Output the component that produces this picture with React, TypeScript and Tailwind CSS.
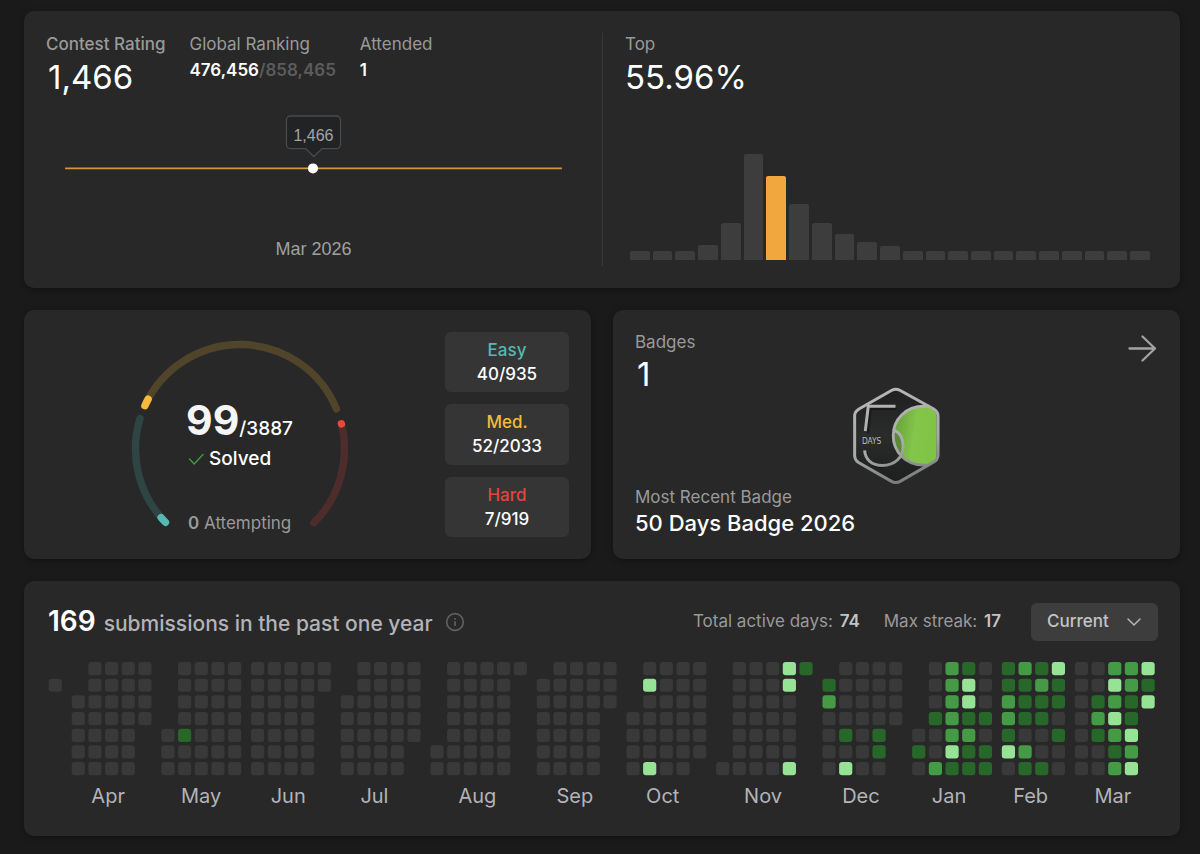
import type { ReactNode } from 'react';
import { ChevronDown } from 'lucide-react';

const ratingBars = [9, 9, 9, 15, 37, 106, 84, 56, 37, 26, 18, 14, 9, 9, 9, 9, 9, 9, 9, 9, 9, 9, 9];
const userBar = 6;

const difficulties = [
  { label: 'Easy', count: '40/935', color: 'text-[#56b8b3]' },
  { label: 'Med.', count: '52/2033', color: 'text-[#f6b93b]' },
  { label: 'Hard', count: '7/919', color: 'text-[#e0463e]' },
];

// One string per week, Sunday first. "." is a day outside the month, 0-3 is the activity level.
const FULL = '0000000';
const months = [
  { label: '', weeks: ['.0.....'] },
  { label: 'Apr', weeks: ['..00000', FULL, FULL, FULL, '0000...'] },
  { label: 'May', weeks: ['....000', '0000100', FULL, FULL, FULL] },
  { label: 'Jun', weeks: [FULL, FULL, FULL, FULL, '00.....'] },
  { label: 'Jul', weeks: ['..00000', FULL, FULL, FULL, '00000..'] },
  { label: 'Aug', weeks: ['.....00', FULL, FULL, FULL, FULL, '0......'] },
  { label: 'Sep', weeks: ['.000000', FULL, FULL, FULL, '000....'] },
  { label: 'Oct', weeks: ['...0000', '0300003', FULL, FULL, '000000.'] },
  { label: 'Nov', weeks: ['......0', FULL, FULL, FULL, '3300003', '1......'] },
  { label: 'Dec', weeks: ['.120000', '0000103', FULL, '0000110', '0000...'] },
  { label: 'Jan', weeks: ['....010', '0001002', '2222231', '1331211', '0001011'] },
  { label: 'Feb', weeks: ['1122130', '2111021', '1211001', '3110100'] },
  { label: 'Mar', weeks: [FULL, '0012100', '2323212', '2211323', '313....'] },
];

const levelColors = ['#393939', '#28672a', '#459b45', '#97e396'];

const CELL = 13.2;
const PITCH = 16.67;
const MONTH_GAP = 6.33;

function Card({ className = '', children }: { className?: string; children: ReactNode }) {
  return (
    <section className={`rounded-[10px] bg-[#282828] p-[22px] shadow-[0_2px_6px_rgba(0,0,0,0.3)] ${className}`}>
      {children}
    </section>
  );
}

function RatingChart() {
  return (
    <svg viewBox="0 0 555 156" className="mt-auto w-full" role="img" aria-label="Contest rating history">
      <path d="M19 58.3H515" stroke="#d0973c" strokeWidth="1.6" />
      <path
        d="M244 6h46a4 4 0 0 1 4 4v24.500a4 4 0 0 1-4 4h-14.500l-8.200 8-8.200-8H244a4 4 0 0 1-4-4V10a4 4 0 0 1 4-4z"
        fill="#222325"
        stroke="#484a4c"
        strokeWidth="1.300"
      />
      <circle cx="266.500" cy="58.300" r="5" fill="#fff" />
      <text x="267" y="31" textAnchor="middle" className="fill-[#a4a4a6] font-['Liberation_Sans',sans-serif] text-[16px]">
        1,466
      </text>
      <text x="267" y="145" textAnchor="middle" className="fill-[#a0a0a2] font-['Liberation_Sans',sans-serif] text-[18px]">
        Mar 2026
      </text>
    </svg>
  );
}

function arc(from: number, to: number, r = 104.5) {
  const point = (deg: number) => {
    const rad = (deg * Math.PI) / 180;
    return `${r * Math.cos(rad)} ${r * Math.sin(rad)}`;
  };
  return `M${point(from)}A${r} ${r} 0 0 1 ${point(to)}`;
}

function SolvedGauge() {
  return (
    <div className="relative w-[218px]">
      <svg viewBox="-109 -117 218 205" fill="none" strokeWidth="7.400" strokeLinecap="round" className="w-full">
        <path d={arc(135.5, 197)} stroke="#2f4544" />
        <path d={arc(204.5, 337.4)} stroke="#50442a" />
        <path d={arc(346, 405)} stroke="#4d2d2b" />
        <path d={arc(135.5, 139)} stroke="#56b8b3" />
        <path d={arc(204.5, 208.5)} stroke="#f6b93b" />
        <path d={arc(346, 346.1)} stroke="#ee453e" />
      </svg>
      <div className="absolute inset-0 flex flex-col pt-16 pl-[55px] whitespace-nowrap">
        <p className="h-12 leading-[48px] text-white">
          <span className="text-[41px] font-bold text-[#f5f5f5]">99</span>
          <span className="text-[19px] font-medium">/3887</span>
        </p>
        <p className="flex items-center gap-[3px] text-[19px] leading-[30px] font-medium text-white">
          <svg width="20" height="18" viewBox="0 0 20 18" fill="none" stroke="#3d9a40" strokeWidth="1.500">
            <path d="M3.500 9l4.700 5L17 4.500" strokeLinecap="round" />
          </svg>
          Solved
        </p>
        <p className="mt-auto pl-0.5 text-[17px] leading-7 text-[#9a9a9a]">
          <span className="font-semibold">0</span> Attempting
        </p>
      </div>
    </div>
  );
}

function FiftyDaysBadge() {
  return (
    <svg viewBox="34 28 272 304" className="h-[101px]" fill="none" role="img" aria-label="50 Days Badge 2026">
      <defs>
        <linearGradient id="metal" gradientUnits="userSpaceOnUse" x1="120" y1="40" x2="190" y2="325">
          <stop offset="0" stopColor="#b6b6b6" />
          <stop offset="0.6" stopColor="#a9aaaa" />
          <stop offset="1" stopColor="#777b79" />
        </linearGradient>
        <linearGradient id="leaf" x1="0" y1="0.300" x2="1" y2="0.500">
          <stop offset="0" stopColor="#649f39" />
          <stop offset="0.500" stopColor="#84c54b" />
          <stop offset="1" stopColor="#7fc444" />
        </linearGradient>
        <linearGradient id="plate" x1="0" y1="0" x2="0" y2="1">
          <stop offset="0" stopColor="#202020" />
          <stop offset="0.500" stopColor="#2a2b2b" />
          <stop offset="1" stopColor="#1d1e1e" />
        </linearGradient>
      </defs>
      <path
        d="M157 44Q169 37 181 44L283 100Q296 108 296 122V238Q296 252 283 260L182 318Q169 325 156 318L58 262Q45 254 45 240V120Q45 108 58 100Z"
        fill="url(#plate)"
      />
      <path
        d="M254 92H268Q292 100 292 124V238Q292 260 268 268H252C198 268 161 228 161 180C161 132 198 92 254 92Z"
        fill="url(#leaf)"
      />
      <path
        d="M165 164C186 176 193 194 193 216C193 226 190 238 184 244C170 226 163 200 163 176Z"
        fill="#5b8a36"
      />
      <path
        d="M171 99H92L84 172M80 230C82 257 101 275 133 275"
        stroke="#121212"
        strokeWidth="9"
        opacity="0.600"
      />
      <path
        d="M157 44Q169 37 181 44L283 100Q296 108 296 122V238Q296 252 283 260L182 318Q169 325 156 318L58 262Q45 254 45 240V120Q45 108 58 100Z"
        stroke="url(#metal)"
        strokeWidth="9"
      />
      <path d="M270 92H254C198 92 161 132 161 180C161 228 198 269 252 269H268" stroke="url(#metal)" strokeWidth="8.500" />
      <path
        d="M168 92H86L77 167M75 225C77 252 96 270 128 270C166 270 191 246 191 212C191 190 181 172 164 164"
        stroke="url(#metal)"
        strokeWidth="9"
      />
      <text x="67" y="207" className="fill-[#bdbdbd] font-['Liberation_Sans_Narrow','DejaVu_Sans_Condensed',sans-serif] text-[25px]">
        DAYS
      </text>
    </svg>
  );
}

function Heatmap() {
  let x = 2.67;
  return (
    <svg viewBox="0 0 1112 152" className="mt-[21px] w-full" role="img" aria-label="Submission calendar">
      {months.map(({ label, weeks }, m) => {
        const start = x;
        x += weeks.length * PITCH + MONTH_GAP;
        return (
          <g key={m}>
            {weeks.map((week, w) =>
              week.split('').map((level, d) =>
                level === '.' ? null : (
                  <rect
                    key={`${w}-${d}`}
                    x={start + w * PITCH}
                    y={d * PITCH}
                    width={CELL}
                    height={CELL}
                    rx="3"
                    fill={levelColors[Number(level)]}
                  />
                ),
              )
            )}
            <text x={start + (weeks.length * PITCH) / 2 - 22} y="141" className="fill-[#b3b3b8] text-[20px]">
              {label}
            </text>
          </g>
        );
      })}
    </svg>
  );
}

export default function App() {
  return (
    <main className="flex min-h-screen flex-col gap-[22px] bg-[#1a1a1a] pt-[11px] pr-5 pb-[18px] pl-6 font-['Inter',sans-serif]">
      <Card className="grid grid-cols-2">
        <div className="flex min-h-[233px] flex-col">
          <div className="flex gap-6 text-[17px] leading-[22px] text-[#9a9a9a]">
            <div>
              <h2 className="font-medium">Contest Rating</h2>
              <p className="pl-0.5 text-[33px] leading-[44px] text-white">1,466</p>
            </div>
            <div>
              <h2>Global Ranking</h2>
              <p className="leading-[30px] font-semibold text-[#5c5c5c]">
                <span className="text-white">476,456</span>/858,465
              </p>
            </div>
            <div>
              <h2>Attended</h2>
              <p className="leading-[30px] font-semibold text-white">1</p>
            </div>
          </div>
          <RatingChart />
        </div>
        <div className="flex flex-col border-l border-[#383838] pl-[22px]">
          <h2 className="text-[17px] leading-[22px] text-[#9a9a9a]">Top</h2>
          <p className="text-[33px] leading-[44px] text-white">55.96%</p>
          <div className="mt-auto mr-2 mb-[6px] ml-[5px] flex items-end gap-[3px]">
            {ratingBars.map((height, i) => (
              <div
                key={i}
                className={`flex-1 rounded-t-xs ${i === userBar ? 'bg-[#f2a63e]' : 'bg-[#3d3d3d]'}`}
                style={{ height }}
              />
            ))}
          </div>
        </div>
      </Card>

      <div className="grid grid-cols-2 gap-[22px]">
        <Card className="flex gap-[11px]">
          <div className="flex flex-1 justify-center">
            <SolvedGauge />
          </div>
          <div className="flex w-[124px] flex-col gap-3">
            {difficulties.map(({ label, count, color }) => (
              <div
                key={label}
                className="flex flex-1 flex-col items-center justify-center rounded-md bg-[#353535] text-[17px] leading-6 font-medium"
              >
                <span className={color}>{label}</span>
                <span className="text-white">{count}</span>
              </div>
            ))}
          </div>
        </Card>

        <Card className="relative flex flex-col">
          <h2 className="text-[17px] leading-5 text-[#9a9a9a]">Badges</h2>
          <p className="pl-0.5 text-[33px] leading-[44px] text-white">1</p>
          <div className="absolute inset-0 flex items-center justify-center pt-0.5">
            <FiftyDaysBadge />
          </div>
          <button type="button" aria-label="All badges" className="absolute top-[22px] right-[22px]">
            <svg width="32" height="32" viewBox="0 0 32 32" fill="none" stroke="#a3a3a3" strokeWidth="2.300" strokeLinecap="round" strokeLinejoin="round">
              <path d="M3.500 16.500H29M16.500 4.500L29 16.500L16.500 28.500" />
            </svg>
          </button>
          <p className="mt-auto text-[17px] leading-6 text-[#9a9a9a]">Most Recent Badge</p>
          <p className="text-[22px] leading-7 font-medium text-white">50 Days Badge 2026</p>
        </Card>
      </div>

      <Card>
        <div className="flex items-center">
          <h2 className="flex items-baseline gap-2 pl-0.5 text-[21px] leading-8 font-medium text-[#b3b3b8]">
            <span className="text-[28px] font-semibold text-white">169</span> submissions in the past one year
          </h2>
          <svg width="20" height="20" viewBox="0 0 20 20" fill="none" stroke="#5f5f5f" strokeWidth="1.700" className="ml-3">
            <circle cx="10" cy="10" r="8.300" />
            <path d="M10 9.200V14M10 6V7.800" />
          </svg>
          <p className="ml-auto text-[17px] text-[#9a9a9a]">
            Total active days: <span className="ml-0.5 font-semibold text-[#c4c4c4]">74</span>
          </p>
          <p className="ml-6 text-[17px] text-[#9a9a9a]">
            Max streak: <span className="ml-0.5 font-semibold text-[#c4c4c4]">17</span>
          </p>
          <div className="relative ml-[30px]">
            <select
              aria-label="Year"
              className="block h-[38px] w-[127px] appearance-none rounded-md bg-[#3d3d3d] pl-4 text-[17px] font-medium text-[#c4c4c4]"
            >
              <option>Current</option>
            </select>
            <ChevronDown size={24} strokeWidth={1.5} className="pointer-events-none absolute top-[7px] right-3 text-[#b5b5b5]" />
          </div>
        </div>
        <Heatmap />
      </Card>
    </main>
  );
}
